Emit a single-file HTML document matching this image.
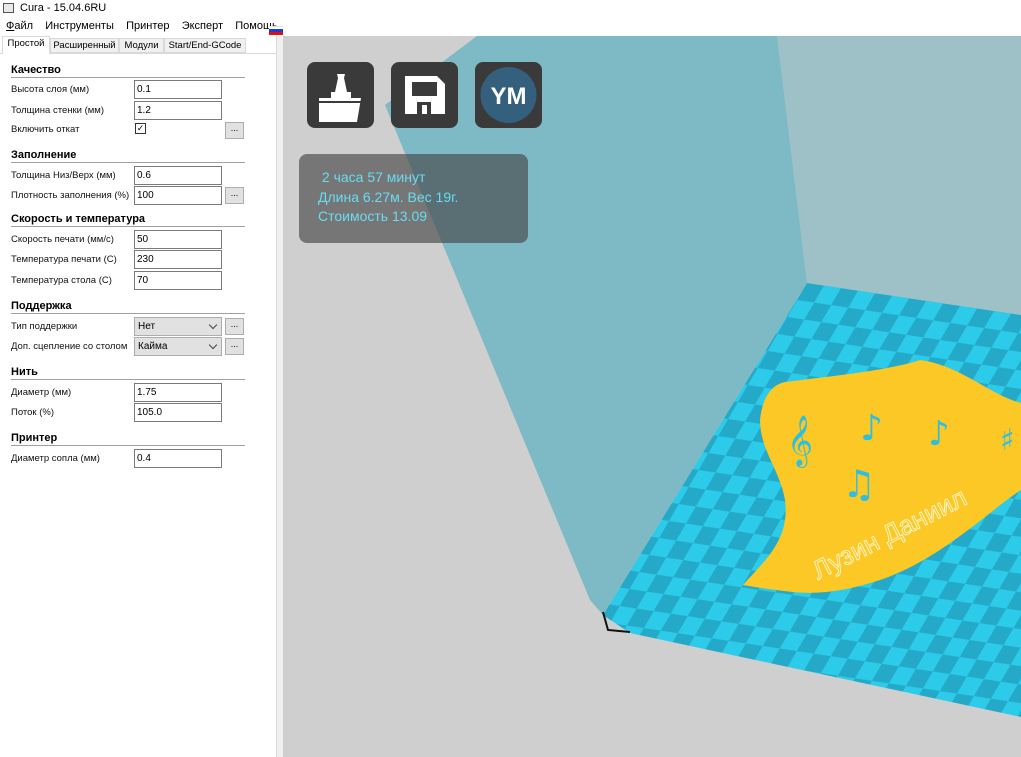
<!DOCTYPE html>
<html><head><meta charset="utf-8"><style>
*{margin:0;padding:0;box-sizing:border-box}
body{width:1021px;height:757px;overflow:hidden;background:#fff;font-family:"Liberation Sans",sans-serif;position:relative;font-size:12px;color:#000}
.a{position:absolute}
.lbl{position:absolute;left:11px;font-size:9.5px;color:#111}
.inp{position:absolute;left:134px;width:88px;height:19px;border:1px solid #7a7a7a;background:#fff;font-size:10px;padding:3px 0 0 2px}
.btn{position:absolute;left:225px;width:19px;height:17px;border:1px solid #adadad;background:#e1e1e1;font-size:9px;text-align:center;line-height:10px}
.sel{position:absolute;left:134px;width:88px;height:19px;border:1px solid #adadad;background:#e1e1e1;font-size:10px;padding:3px 0 0 3px}
.sel:after{content:"";position:absolute;right:5px;top:4px;width:5px;height:5px;border-right:1px solid #444;border-bottom:1px solid #444;transform:rotate(45deg)}
.hd{position:absolute;left:11px;width:234px;font-size:11px;font-weight:bold;border-bottom:1px solid #a0a0a0;padding-bottom:1px}
.tab{position:absolute;top:38px;height:15px;font-size:9.5px;border:1px solid #d9d9d9;background:#f0f0f0;padding:1px 0;text-align:center;white-space:nowrap;overflow:hidden}
.ic{position:absolute;top:62px;width:67px;height:66px;background:#3a3a3a;border-radius:8px}
</style></head><body>
<div class="a" style="left:3px;top:3px;width:11px;height:10px;border:1px solid #555;background:#e8e8e8"></div>
<div class="a" style="left:20px;top:2px;font-size:11px">Cura - 15.04.6RU</div>
<div class="a" style="left:6px;top:20px;font-size:11px"><u>Ф</u>айл&nbsp;&nbsp;&nbsp; Инструменты&nbsp;&nbsp;&nbsp; Принтер&nbsp;&nbsp;&nbsp; Эксперт&nbsp;&nbsp;&nbsp; Помощь</div>
<div class="a" style="left:269px;top:26px;width:14px;height:3px;background:#fff;border-top:1px solid #ddd"></div>
<div class="a" style="left:269px;top:29px;width:14px;height:3px;background:#1a3fd0"></div>
<div class="a" style="left:269px;top:32px;width:14px;height:3px;background:#e01010"></div>
<div class="a" style="left:276px;top:36px;width:7px;height:721px;background:#f0f0f0;border-left:1px solid #d9d9d9"></div>
<div class="a" style="left:0;top:53px;width:277px;height:704px;border-top:1px solid #d9d9d9"></div>
<div class="tab" style="left:2px;top:36px;height:18px;background:#fff;border-bottom:none;width:48px">Простой</div>
<div class="tab" style="left:50px;width:69px">Расширенный</div>
<div class="tab" style="left:119px;width:45px">Модули</div>
<div class="tab" style="left:164px;width:82px">Start/End-GCode</div>
<div class="hd" style="top:64px">Качество</div>
<div class="lbl" style="top:84px">Высота слоя (мм)</div><div class="inp" style="top:80px">0.1</div>
<div class="lbl" style="top:105px">Толщина стенки (мм)</div><div class="inp" style="top:101px">1.2</div>
<div class="lbl" style="top:124px">Включить откат</div>
<div class="a" style="left:135px;top:123px;width:11px;height:11px;border:1px solid #333;font-size:9px;line-height:9px;text-align:center">✓</div>
<div class="btn" style="top:122px">...</div>
<div class="hd" style="top:149px">Заполнение</div>
<div class="lbl" style="top:170px">Толщина Низ/Верх (мм)</div><div class="inp" style="top:166px">0.6</div>
<div class="lbl" style="top:190px">Плотность заполнения (%)</div><div class="inp" style="top:186px">100</div><div class="btn" style="top:187px">...</div>
<div class="hd" style="top:213px">Скорость и температура</div>
<div class="lbl" style="top:234px">Скорость печати (мм/с)</div><div class="inp" style="top:230px">50</div>
<div class="lbl" style="top:254px">Температура печати (С)</div><div class="inp" style="top:250px">230</div>
<div class="lbl" style="top:275px">Температура стола (С)</div><div class="inp" style="top:271px">70</div>
<div class="hd" style="top:300px">Поддержка</div>
<div class="lbl" style="top:321px">Тип поддержки</div><div class="sel" style="top:317px">Нет</div><div class="btn" style="top:318px">...</div>
<div class="lbl" style="top:341px">Доп. сцепление со столом</div><div class="sel" style="top:337px">Кайма</div><div class="btn" style="top:338px">...</div>
<div class="hd" style="top:366px">Нить</div>
<div class="lbl" style="top:387px">Диаметр (мм)</div><div class="inp" style="top:383px">1.75</div>
<div class="lbl" style="top:407px">Поток (%)</div><div class="inp" style="top:403px">105.0</div>
<div class="hd" style="top:432px">Принтер</div>
<div class="lbl" style="top:453px">Диаметр сопла (мм)</div><div class="inp" style="top:449px">0.4</div>
<svg class="a" style="left:283px;top:36px" width="738" height="721" viewBox="283 36 738 721">
<defs>
<pattern id="ck" width="34" height="34" patternUnits="userSpaceOnUse" patternTransform="matrix(1,0.15,-0.58,1,807,283)">
<rect width="34" height="34" fill="#2ccbea"/><rect width="17" height="17" fill="#24a9c8"/><rect x="17" y="17" width="17" height="17" fill="#24a9c8"/>
</pattern>
</defs>
<rect x="283" y="36" width="738" height="721" fill="#cfcfcf"/>
<polygon points="777,36 1021,36 1021,315 807,283" fill="#9ec0c7"/>
<polygon points="807,283 1021,315 1021,717 630,633 603,615" fill="url(#ck)"/>
<polygon points="477,36 777,36 807,283 603,615 590,600 385,105" fill="#7dbac5"/>
<path d="M603,612 L608,630 L630,632" stroke="#111" stroke-width="2" fill="none"/>
<path d="M785,382 C840,375 890,370 920,360 C960,365 990,395 1021,403 L1021,490 C990,510 940,560 880,580 C850,590 820,595 793,592 C775,590 760,588 743,585 C765,560 790,540 785,500 C780,470 760,450 760,420 C762,400 770,385 785,382 Z" fill="#fbc825"/>
<g fill="#2cbfe0" font-family="DejaVu Sans,sans-serif">
<text x="787" y="455" font-size="44">𝄞</text>
<text x="860" y="440" font-size="36">♪</text>
<text x="928" y="445" font-size="34">♪</text>
<text x="842" y="497" font-size="38">♫</text>
<text x="1000" y="450" font-size="30">♯</text>
</g>
<text x="818" y="580" font-size="26" fill="none" stroke="#fff3c0" stroke-width="1" transform="rotate(-27 818 580)" font-family="Liberation Sans,sans-serif">Лузин Даниил</text>
</svg>
<div class="ic" style="left:307px"><svg width="67" height="66"><path d="M12,36 h12 v-6 h20 v6 h10 l-4,24 h-38z" fill="#fff"/><path d="M30,12 h8 l-1,4 3,14 h-12 l3,-14z" fill="#fff"/><path d="M12,40 h42" stroke="#3a3a3a" stroke-width="2"/></svg></div>
<div class="ic" style="left:391px"><svg width="67" height="66"><path d="M14,14 h32 l8,8 v30 h-40z" fill="#fff"/><rect x="21" y="20" width="25" height="14" fill="#3a3a3a"/><rect x="26" y="40" width="14" height="12" fill="#3a3a3a"/><rect x="31" y="43" width="5" height="9" fill="#fff"/></svg></div>
<div class="ic" style="left:475px"><svg width="67" height="66"><circle cx="33.5" cy="33" r="28" fill="#34607e"/><text x="33.5" y="42" text-anchor="middle" font-family="Liberation Sans,sans-serif" font-weight="bold" font-size="24" fill="#fff">YM</text></svg></div>
<div class="a" style="left:299px;top:154px;width:229px;height:89px;background:rgba(70,70,70,0.65);border-radius:8px;color:#68dcf2;font-size:14px;line-height:19.5px;padding:14px 0 0 19px">&nbsp;2 часа 57 минут<br>Длина 6.27м. Вес 19г.<br>Стоимость 13.09</div>
</body></html>
